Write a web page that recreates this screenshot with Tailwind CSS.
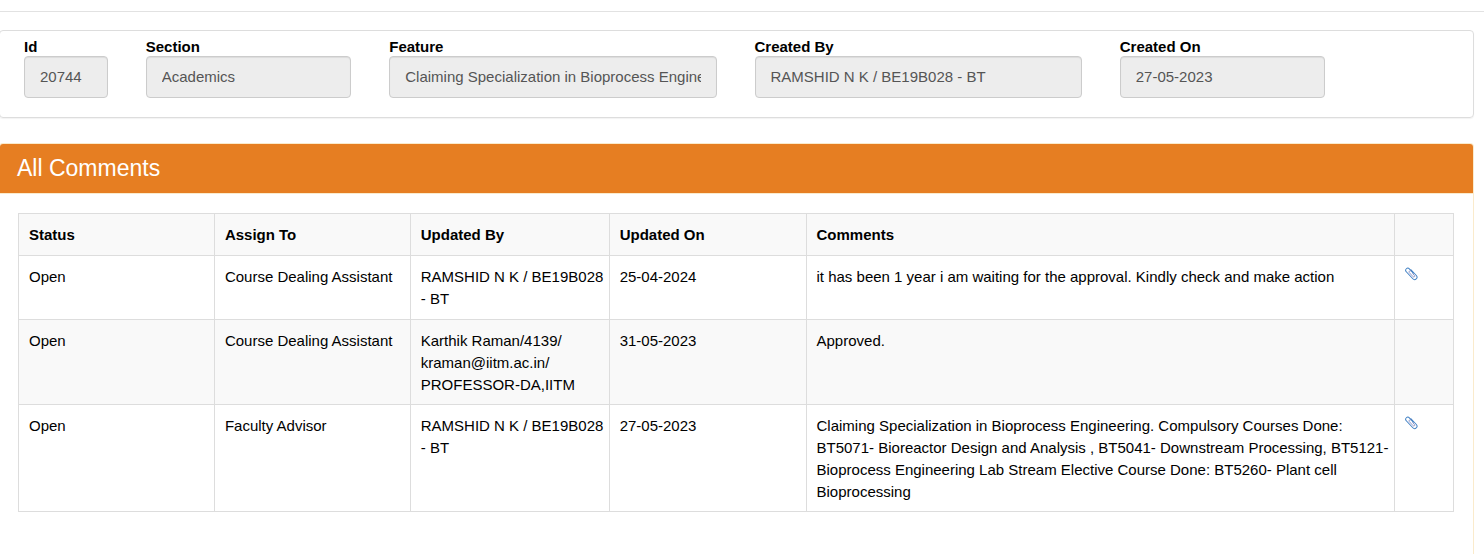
<!DOCTYPE html>
<html lang="en">
<head>
<meta charset="utf-8">
<title>All Comments</title>
<script src="https://cdn.jsdelivr.net/npm/@tailwindcss/browser@4"></script>
</head>
<body class="bg-white text-black text-[15px] leading-[22px] font-['Liberation_Sans',Arial,sans-serif]">
<div class="flex min-h-screen flex-col overflow-x-hidden pt-[11px]">
  <hr class="border-t border-[#e2e2e2]">

  <form class="mt-[18px] mr-[10px] -ml-px rounded border border-[#ddd] pt-[5px] pr-[7px] pb-[19px] pl-[5px] shadow-[0_1px_1px_rgba(0,0,0,0.05)]">
    <div class="grid grid-cols-12">
      <div class="col-span-1 px-[19px]">
        <label for="id" class="block h-5 font-bold">Id</label>
        <input id="id" readonly value="20744" class="block h-[42px] w-full rounded border border-[#ccc] bg-[#ededed] px-[15px] pb-[2px] text-[#555] shadow-[inset_0_1px_1px_rgba(0,0,0,0.075)]">
      </div>
      <div class="col-span-2 px-[19px]">
        <label for="section" class="block h-5 font-bold">Section</label>
        <input id="section" readonly value="Academics" class="block h-[42px] w-full rounded border border-[#ccc] bg-[#ededed] px-[15px] pb-[2px] text-[#555] shadow-[inset_0_1px_1px_rgba(0,0,0,0.075)]">
      </div>
      <div class="col-span-3 px-[19px]">
        <label for="feature" class="block h-5 font-bold">Feature</label>
        <input id="feature" readonly value="Claiming Specialization in Bioprocess Engineering" class="block h-[42px] w-full rounded border border-[#ccc] bg-[#ededed] px-[15px] pb-[2px] text-[#555] shadow-[inset_0_1px_1px_rgba(0,0,0,0.075)]">
      </div>
      <div class="col-span-3 px-[19px]">
        <label for="created-by" class="block h-5 font-bold">Created By</label>
        <input id="created-by" readonly value="RAMSHID N K / BE19B028 - BT" class="block h-[42px] w-full rounded border border-[#ccc] bg-[#ededed] px-[15px] pb-[2px] text-[#555] shadow-[inset_0_1px_1px_rgba(0,0,0,0.075)]">
      </div>
      <div class="col-span-2 px-[19px]">
        <label for="created-on" class="block h-5 font-bold">Created On</label>
        <input id="created-on" readonly value="27-05-2023" class="block h-[42px] w-full rounded border border-[#ccc] bg-[#ededed] px-[15px] pb-[2px] text-[#555] shadow-[inset_0_1px_1px_rgba(0,0,0,0.075)]">
      </div>
    </div>
  </form>

  <section class="mt-[25px] mr-[10px] -ml-px flex-1 rounded-t border border-b-0 border-[#faebcc]">
    <h1 class="rounded-t-[3px] border-b border-[#faebcc] bg-[#e67e22] py-3 pl-[17px] text-[23px] leading-[25px] text-white">All Comments</h1>
    <div class="pt-[19px] pr-[19px] pb-10 pl-[18px]">
      <table class="w-full table-fixed border-collapse text-left [&_td]:border [&_td]:border-[#ddd] [&_td]:pt-[10px] [&_td]:pr-[2px] [&_td]:pb-2 [&_td]:pl-[10px] [&_td]:align-top [&_th]:border [&_th]:border-[#ddd] [&_th]:px-[10px] [&_th]:py-[9px]">
        <colgroup>
          <col class="w-[13.65%]"><col class="w-[13.65%]"><col class="w-[13.86%]"><col class="w-[13.72%]"><col class="w-[41%]"><col>
        </colgroup>
        <thead>
          <tr class="h-[42px] bg-[#f9f9f9]"><th>Status</th><th>Assign To</th><th>Updated By</th><th>Updated On</th><th>Comments</th><th aria-label="Attachment"></th></tr>
        </thead>
        <tbody>
          <tr class="h-16">
            <td>Open</td><td>Course Dealing Assistant</td><td>RAMSHID N K / BE19B028 - BT</td><td>25-04-2024</td>
            <td>it has been 1 year i am waiting for the approval. Kindly check and make action</td>
            <td><a href="#" aria-label="Attachment" class="inline-block align-top"><svg width="13" height="15" viewBox="0 0 13 15" fill="none" stroke-linecap="round"><g transform="translate(6.3 7.6) rotate(-43)"><path d="M2.4-3V4.8A2.4 2.4 0 0 1-2.4 4.8V-4.8A2.1 2.1 0 0 1 1.8-4.8V1" stroke="#4080c4"/><path d="M1 1V3.6A.9.9 0 0 1-.8 3.6V-2.2A1.3 1.3 0 0 1 1.6-2.4" stroke="#7f86bd" stroke-width=".8"/></g></svg></a></td>
          </tr>
          <tr class="bg-[#f9f9f9]">
            <td>Open</td><td>Course Dealing Assistant</td><td>Karthik Raman/4139/<br>kraman@iitm.ac.in/<br>PROFESSOR-DA,IITM</td><td>31-05-2023</td><td>Approved.</td><td></td>
          </tr>
          <tr>
            <td>Open</td><td>Faculty Advisor</td><td>RAMSHID N K / BE19B028 - BT</td><td>27-05-2023</td>
            <td>Claiming Specialization in Bioprocess Engineering. Compulsory Courses Done: BT5071- Bioreactor Design and Analysis , BT5041- Downstream Processing, BT5121- Bioprocess Engineering Lab Stream Elective Course Done: BT5260- Plant cell Bioprocessing</td>
            <td><a href="#" aria-label="Attachment" class="inline-block align-top"><svg width="13" height="15" viewBox="0 0 13 15" fill="none" stroke-linecap="round"><g transform="translate(6.3 7.6) rotate(-43)"><path d="M2.4-3V4.8A2.4 2.4 0 0 1-2.4 4.8V-4.8A2.1 2.1 0 0 1 1.8-4.8V1" stroke="#4080c4"/><path d="M1 1V3.6A.9.9 0 0 1-.8 3.6V-2.2A1.3 1.3 0 0 1 1.6-2.4" stroke="#7f86bd" stroke-width=".8"/></g></svg></a></td>
          </tr>
        </tbody>
      </table>
    </div>
  </section>
</div>
</body>
</html>
